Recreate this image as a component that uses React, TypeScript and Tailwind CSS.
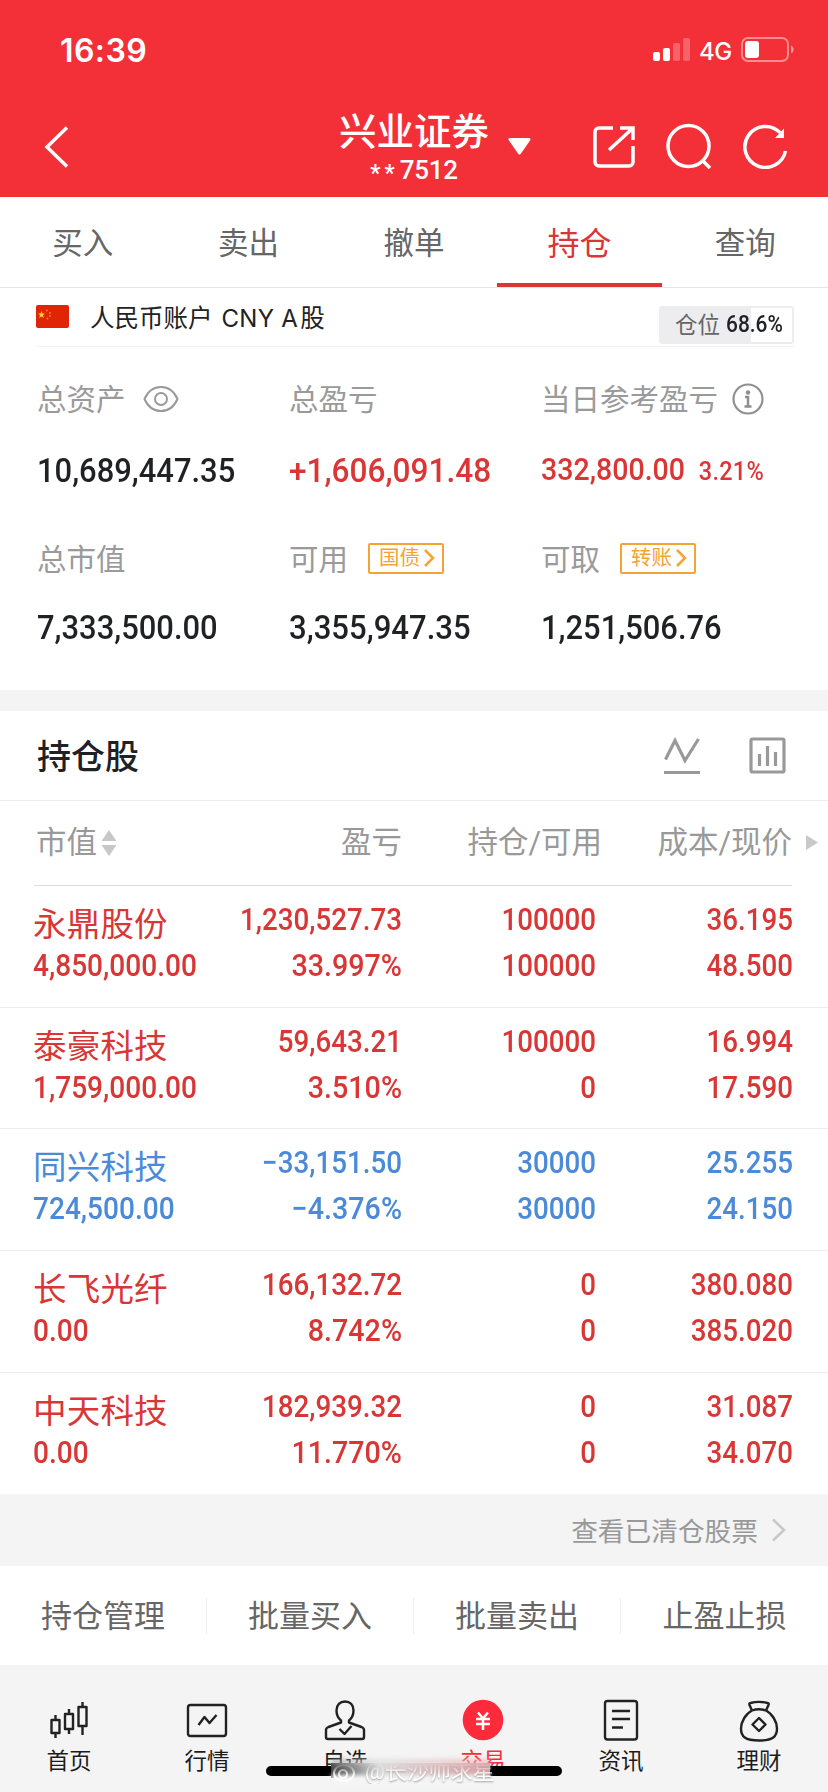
const tabs = ['买入', '卖出', '撤单', '持仓', '查询'];

const holdings = [
  { name: '永鼎股份', value: '4,850,000.00', profit: '1,230,527.73', rate: '33.997%', amount: '100000', usable: '100000', cost: '36.195', price: '48.500' },
  { name: '泰豪科技', value: '1,759,000.00', profit: '59,643.21', rate: '3.510%', amount: '100000', usable: '0', cost: '16.994', price: '17.590' },
  { name: '同兴科技', value: '724,500.00', profit: '−33,151.50', rate: '−4.376%', amount: '30000', usable: '30000', cost: '25.255', price: '24.150', down: true },
  { name: '长飞光纤', value: '0.00', profit: '166,132.72', rate: '8.742%', amount: '0', usable: '0', cost: '380.080', price: '385.020' },
  { name: '中天科技', value: '0.00', profit: '182,939.32', rate: '11.770%', amount: '0', usable: '0', cost: '31.087', price: '34.070' },
];

const actions = ['持仓管理', '批量买入', '批量卖出', '止盈止损'];

const StatusBar = () => (
  <div className="flex h-[100px] items-center justify-between pl-[60px] pr-[33px]">
    <span className="pt-px font-['Inter'] text-[32px] font-semibold leading-none tracking-[0.4px]">16:39</span>
    <div className="flex items-center">
      <svg width="38" height="24" viewBox="0 0 38 24" fill="#fff">
        <rect x="0" y="14" width="7" height="9" rx="2" />
        <rect x="10" y="10" width="7" height="13" rx="2" />
        <rect x="20" y="5" width="7" height="18" rx="2" opacity="0.25" />
        <rect x="30" y="0" width="7" height="23" rx="2" opacity="0.25" />
      </svg>
      <span className="ml-2 mt-[3px] w-[34px] font-['Inter'] text-[24px] font-medium leading-none tracking-[-0.5px]">4G</span>
      <svg className="ml-2" width="54" height="26" viewBox="0 0 54 26" fill="none">
        <rect x="1" y="1" width="46" height="23" rx="6" stroke="#fff" strokeWidth="2" opacity="0.45" />
        <rect x="4" y="4" width="14" height="17" rx="3" fill="#fff" />
        <path d="M50 8.500c3.500 1.500 3.500 6.500 0 8z" fill="#fff" opacity="0.5" />
      </svg>
    </div>
  </div>
);

const NavBar = () => (
  <div className="flex h-[97px] items-start">
    <svg className="ml-[44px] mt-[26px]" width="25" height="42" viewBox="0 0 25 42" fill="none" stroke="#fff" strokeWidth="3.500">
      <path d="M23 1.500 3 21l20 19.500" />
    </svg>
    <div className="ml-[270px] w-[150px] text-center">
      <div className="mt-[13px] whitespace-nowrap text-[37.500px] font-medium leading-[38px]">兴业证券</div>
      <div className="mt-[5px] flex h-[28px] items-start justify-center text-[26px] font-medium leading-[28px]">
        <span className="mr-px pt-[4px] text-[23px] tracking-[4px]">**</span>
        <span className="tracking-[-0.3px]">7512</span>
      </div>
    </div>
    <svg className="ml-[18px] mt-[37px]" width="25" height="19" viewBox="0 0 25 19">
      <path d="M3 1h19c1.500 0 2 1 1.200 2.200L14 16.500c-1 1.500-2 1.500-3 0L1.800 3.200C1 2 1.500 1 3 1z" fill="#fff" />
    </svg>
    <svg className="ml-[59px] mt-[24px]" width="45" height="45" viewBox="0 0 45 45" fill="none" stroke="#fff" strokeWidth="3.500">
      <path d="M22 4H8a4 4 0 0 0-4 4v30a4 4 0 0 0 4 4h30a4 4 0 0 0 4-4V22M29 4h13v12M42 4 18 26" />
    </svg>
    <svg className="ml-[30px] mt-[23px]" width="46" height="46" viewBox="0 0 46 46" fill="none" stroke="#fff" strokeWidth="3.500">
      <circle cx="22.500" cy="23" r="20.500" />
      <path d="m36 37 8 8" />
    </svg>
    <svg className="ml-[31px] mt-[23px]" width="46" height="46" viewBox="0 0 46 46" fill="none" stroke="#fff" strokeWidth="3.500">
      <path d="M42.500 28A20.500 20.500 0 1 1 37 9.500" />
      <path d="M41 5.500V15h-9z" fill="#fff" stroke="none" />
    </svg>
  </div>
);

const Chevron = () => (
  <svg width="11" height="18" viewBox="0 0 11 18" fill="none" stroke="#f5a433" strokeWidth="2.500">
    <path d="m1 1 8 8-8 8" />
  </svg>
);

const Tag = ({ text }: { text: string }) => (
  <span className="ml-[20px] mb-[4px] flex h-[31px] w-[76px] items-center justify-between rounded-[2px] border-2 border-[#f5a433] pl-[9px] pr-[7px] text-[20.500px] text-[#f5a433]">
    {text}
    <Chevron />
  </span>
);

const Assets = () => (
  <div className="h-[343px] bg-white pl-[37px] leading-none">
    <div className="grid h-[104px] grid-cols-[252px_252px_1fr] items-center text-[29.500px] text-[#9a9a9a]">
      <div className="flex items-center">
        <span className="pt-[3px]">总资产</span>
        <svg className="ml-[17px]" width="36" height="28" viewBox="0 0 36 28" fill="none" stroke="#9a9a9a" strokeWidth="2">
          <path d="M1.500 14C5 6 11 2 18 2s13 4 16.500 12C31 22 25 26 18 26S5 22 1.500 14z" />
          <circle cx="18" cy="14" r="6" />
        </svg>
      </div>
      <div className="pt-[3px]">总盈亏</div>
      <div className="flex items-center">
        <span className="pt-[3px]">当日参考盈亏</span>
        <svg className="ml-[14px]" width="32" height="32" viewBox="0 0 32 32" fill="none" stroke="#8f8f8f" strokeWidth="2.200">
          <circle cx="16" cy="16" r="14.500" />
          <circle cx="16" cy="9.500" r="2.200" fill="#8f8f8f" stroke="none" />
          <path d="M13 14h3v9M12.500 23.500h7" strokeWidth="2.500" />
        </svg>
      </div>
    </div>
    <div className="mt-px grid h-[36px] grid-cols-[252px_252px_1fr] items-center text-[34px] font-medium text-[#1f2124]">
      <div className="origin-left scale-x-[0.91]">10,689,447.35</div>
      <div className="origin-left scale-x-[0.93] text-[#dc3535]">+1,606,091.48</div>
      <div className="mb-[2px] flex origin-left scale-x-[0.92] items-baseline text-[31px] text-[#dc3535]">
        332,800.00<span className="ml-[15px] text-[25.500px] tracking-[0.3px]">3.21%</span>
      </div>
    </div>
    <div className="mt-[54px] grid h-[36px] grid-cols-[252px_252px_1fr] items-center text-[29.500px] text-[#9a9a9a]">
      <div className="pt-[2px]">总市值</div>
      <div className="flex items-center"><span className="pt-[2px]">可用</span><Tag text="国债" /></div>
      <div className="flex items-center"><span className="pt-[2px]">可取</span><Tag text="转账" /></div>
    </div>
    <div className="mt-[31px] grid h-[36px] grid-cols-[252px_252px_1fr] items-center text-[34px] font-medium text-[#1f2124]">
      <div className="origin-left scale-x-[0.91]">7,333,500.00</div>
      <div className="origin-left scale-x-[0.915]">3,355,947.35</div>
      <div className="origin-left scale-x-[0.91]">1,251,506.76</div>
    </div>
  </div>
);

const Pair = ({ top, bottom }: { top: string; bottom: string }) => (
  <div className="pt-[11px] text-right text-[31px] font-medium leading-[46px]">
    <div className="origin-right scale-x-[0.895]">{top}</div>
    <div className={`origin-right ${bottom.endsWith('%') ? 'scale-x-[0.925]' : 'scale-x-[0.895]'}`}>{bottom}</div>
  </div>
);

const Holdings = () => (
  <div className="bg-white">
    <div className="flex h-[90px] items-center border-b border-[#ececec] pl-[37px] pr-[42px] text-[#1f2124]">
      <span className="flex-1 pt-[3px] text-[34px] font-medium leading-none">持仓股</span>
      <svg width="36" height="38" viewBox="0 0 36 38" fill="none" stroke="#999" strokeWidth="3.200">
        <path d="m1.500 22.500 9.500-19 10 20L34.500 2M0 35.500h36" />
      </svg>
      <svg className="ml-[49px]" width="37" height="37" viewBox="0 0 37 37" fill="none" stroke="#999" strokeWidth="3.200">
        <rect x="2" y="2" width="33" height="33" rx="1.500" />
        <path d="M10.500 17v12M18.500 9v20M26.500 15v14" />
      </svg>
    </div>
    <div className="grid h-[84px] grid-cols-[216px_186px_200px_190px_1fr] items-center text-right text-[30.500px] leading-none text-[#999]">
      <div className="flex items-center pl-[36px]">
        <span className="pt-px">市值</span>
        <svg className="ml-1" width="16" height="26" viewBox="0 0 16 26" fill="#c8c8c8">
          <path d="M8 0l7.500 11H.5zM8 26l7.500-11H.5z" />
        </svg>
      </div>
      <div className="pt-px">盈亏</div>
      <div className="pt-px">持仓/可用</div>
      <div className="pt-px">成本/现价</div>
      <svg className="ml-[14px] mb-[2px]" width="12" height="15" viewBox="0 0 12 15" fill="#c8c8c8">
        <path d="M0 0l12 7.500L0 15z" />
      </svg>
    </div>
    <div className="ml-[34px] mr-9 h-px bg-[#dedede]" />
    {holdings.map((item) => (
      <div
        key={item.name}
        className={`grid h-[121.700px] grid-cols-[216px_186px_194px_197px] border-b border-[#ececec] last:border-b-0 ${item.down ? 'text-[#4a8ad8]' : 'text-[#d93636]'}`}
      >
        <div className="pl-[33px] pt-[16px]">
          <div className="text-[33.500px] leading-[46px] tracking-[0.2px]">{item.name}</div>
          <div className="-mt-[5px] origin-left scale-x-[0.905] whitespace-nowrap text-[31px] font-medium leading-[46px]">{item.value}</div>
        </div>
        <Pair top={item.profit} bottom={item.rate} />
        <Pair top={item.amount} bottom={item.usable} />
        <Pair top={item.cost} bottom={item.price} />
      </div>
    ))}
  </div>
);

const icons = {
  home: (
    <path d="M17 18h8v13h-8zM21 13v5M21 31v5M30.500 12h8v15h-8zM34.500 7v5M34.500 27v5M44 5h8v19h-8zM48 0v5M48 24v9" transform="translate(-14.500 2)" />
  ),
  market: (
    <>
      <rect x="1" y="5" width="38" height="31" rx="2.500" />
      <path d="m11.500 25 6-8 5 6 7-8" />
    </>
  ),
  favorite: (
    <>
      <path d="M16 20.500c-3-2.500-4.500-5.500-4.500-10C11.500 5 15 1.500 20 1.500s8.500 3.500 8.500 9c0 4.500-1.500 7.500-4.500 10v2l12.500 4.500c1.800.7 2.500 1.500 2.500 3V37c0 1.500-.5 2-2 2H3c-1.500 0-2-.5-2-2v-7c0-1.500.7-2.300 2.500-3L16 22.500z" />
      <path d="m14.500 29 5 5 7-8" />
    </>
  ),
  trade: (
    <>
      <circle cx="20" cy="20" r="20.300" fill="#fd2a3c" stroke="none" />
      <path d="m15 12.500 5 6 5-6M13 19h14M13 24h14M20 18.500V30" stroke="#fff" strokeWidth="2.500" />
    </>
  ),
  news: (
    <>
      <rect x="4" y="1" width="32" height="38.500" rx="2.500" />
      <path d="M11 11h18M11 19h18M11 27.500h11" />
    </>
  ),
  wealth: (
    <>
      <path d="M13 10.500 10.500 5c-.5-1.500 0-1.800 1-2 5-1.300 12-1.300 17 0 1 .2 1.500.5 1 2L27 10.500" />
      <path d="M13 10.500c4-1.500 10-1.500 14 0 6 3 11 11 11 18 0 8-4 12-18 12S2 36.500 2 28.500c0-7 5-15 11-18z" />
      <path d="m20 18 6.500 6.500L20 31l-6.500-6.500z" />
    </>
  ),
};

const navItems: { key: keyof typeof icons; label: string }[] = [
  { key: 'home', label: '首页' },
  { key: 'market', label: '行情' },
  { key: 'favorite', label: '自选' },
  { key: 'trade', label: '交易' },
  { key: 'news', label: '资讯' },
  { key: 'wealth', label: '理财' },
];

const BottomNav = () => (
  <div className="relative grid h-[127px] grid-cols-6 bg-[#f4f4f4]">
    {navItems.map(({ key, label }) => (
      <div key={key} className={`flex flex-col items-center pt-[35px] ${key === 'trade' ? 'text-[#fd2a3c]' : 'text-[#1c1c1c]'}`}>
        <svg className="overflow-visible" width="40" height="41" viewBox="0 0 40 41" fill="none" stroke="#222" strokeWidth="2.400" strokeLinejoin="round">
          {icons[key]}
        </svg>
        <span className="mt-[8px] text-[22.500px] leading-[24px]">{label}</span>
      </div>
    ))}
    {/* Home indicator */}
    <div className="absolute left-[266px] top-[101px] h-[10px] w-[296px] rounded-full bg-black" />
    {/* Watermark */}
    <div className="absolute left-[331px] top-[98px] h-[15px] w-[159px] bg-gradient-to-r from-[#444] via-[#dcdcdc] via-30% to-[#d8a0a5]" />
    <div className="absolute left-[331px] top-[94px] h-[6px] w-[159px] bg-gradient-to-r from-[#8888] via-[#e0e0e0cc] via-30% to-[#e8b0b4aa] blur-[2px]" />
    <div className="absolute left-[331px] top-[110px] h-[12px] w-[159px] bg-[#f4f4f4] blur-[2px]" />
    <div className="absolute left-[332px] top-[95px] flex items-center whitespace-nowrap text-[22px] leading-[24px] text-white [mask-image:linear-gradient(transparent_15%,black_70%)] [text-shadow:0_1px_2px_#999]">
      <svg className="mr-2" width="25" height="22" viewBox="0 0 25 22" fill="none" stroke="#fff" strokeWidth="2">
        <ellipse cx="12" cy="12" rx="10" ry="8" />
        <circle cx="11" cy="13" r="4" />
      </svg>
      @长沙帅求星
    </div>
  </div>
);

const App = () => {
  return (
    <div className="h-[1792px] w-[828px] overflow-hidden bg-white font-['Roboto','Noto_Sans_CJK_SC',sans-serif]">
      <div className="h-[197px] bg-[#f33038] text-white">
        <StatusBar />
        <NavBar />
      </div>

      <div className="grid h-[91px] grid-cols-5 border-b border-[#e6e6e6]">
        {tabs.map((tab) => (
          <div
            key={tab}
            className={`flex items-center justify-center pt-[7px] ${tab === '持仓' ? 'border-b-4 border-[#dc3535] text-[32px] text-[#dc3535]' : 'border-b-4 border-transparent text-[30.500px] text-[#666]'}`}
          >
            {tab}
          </div>
        ))}
      </div>

      <div className="ml-9 mr-[34px] flex h-[59px] items-start border-b border-[#f3f3f3]">
        <svg className="mt-[17px]" width="33" height="23" viewBox="0 0 33 23">
          <rect width="33" height="23" rx="2" fill="#df2407" />
          <path d="m5.500 6 1 2.500h2.500l-2 1.700.8 2.800-2.300-1.600L3.200 13l.8-2.800-2-1.700h2.500z" fill="#fbd12b" />
          <g fill="#f08a1c">
            <circle cx="11" cy="5.500" r="0.900" />
            <circle cx="14" cy="8" r="0.900" />
            <circle cx="14" cy="11" r="0.900" />
            <circle cx="11.500" cy="13.500" r="0.900" />
          </g>
        </svg>
        <span className="ml-[21px] mt-[15px] flex-1 text-[24.500px] leading-[32px] text-[#222]">
          人民币账户<span className="ml-[9px] mr-[2px] font-['Inter'] text-[24px] tracking-[0.3px]">CNY A</span>股
        </span>
        <div className="mt-[18px] flex h-[38px] w-[135px] items-center justify-center rounded-[3px] border-2 border-[#ededef] bg-gradient-to-r from-[#ededef] from-[69%] to-white to-[69%] pl-[5px] text-[22.500px] leading-none text-[#666]">
          仓位<span className="ml-[6px] w-[57px] origin-left scale-x-[0.89] text-[23.500px] font-medium text-[#1f2124]">68.6%</span>
        </div>
      </div>

      <Assets />
      <div className="h-[21px] bg-[#f4f4f4]" />
      <Holdings />

      <div className="flex h-[72px] items-center justify-end bg-[#f4f4f4] pr-[42px] text-[26.700px] text-[#999]">
        <span className="pt-[3px]">查看已清仓股票</span>
        <svg className="ml-[13px]" width="15" height="24" viewBox="0 0 15 24" fill="none" stroke="#c8c8c8" strokeWidth="2.500">
          <path d="m2 1.500 11 10.500L2 22.500" />
        </svg>
      </div>

      <div className="grid h-[99px] grid-cols-4 items-center divide-x divide-[#eee]">
        {actions.map((action) => (
          <div key={action} className="h-[36px] text-center text-[31px] leading-[38px] text-[#666]">
            {action}
          </div>
        ))}
      </div>

      <BottomNav />
    </div>
  );
};

export default App;
